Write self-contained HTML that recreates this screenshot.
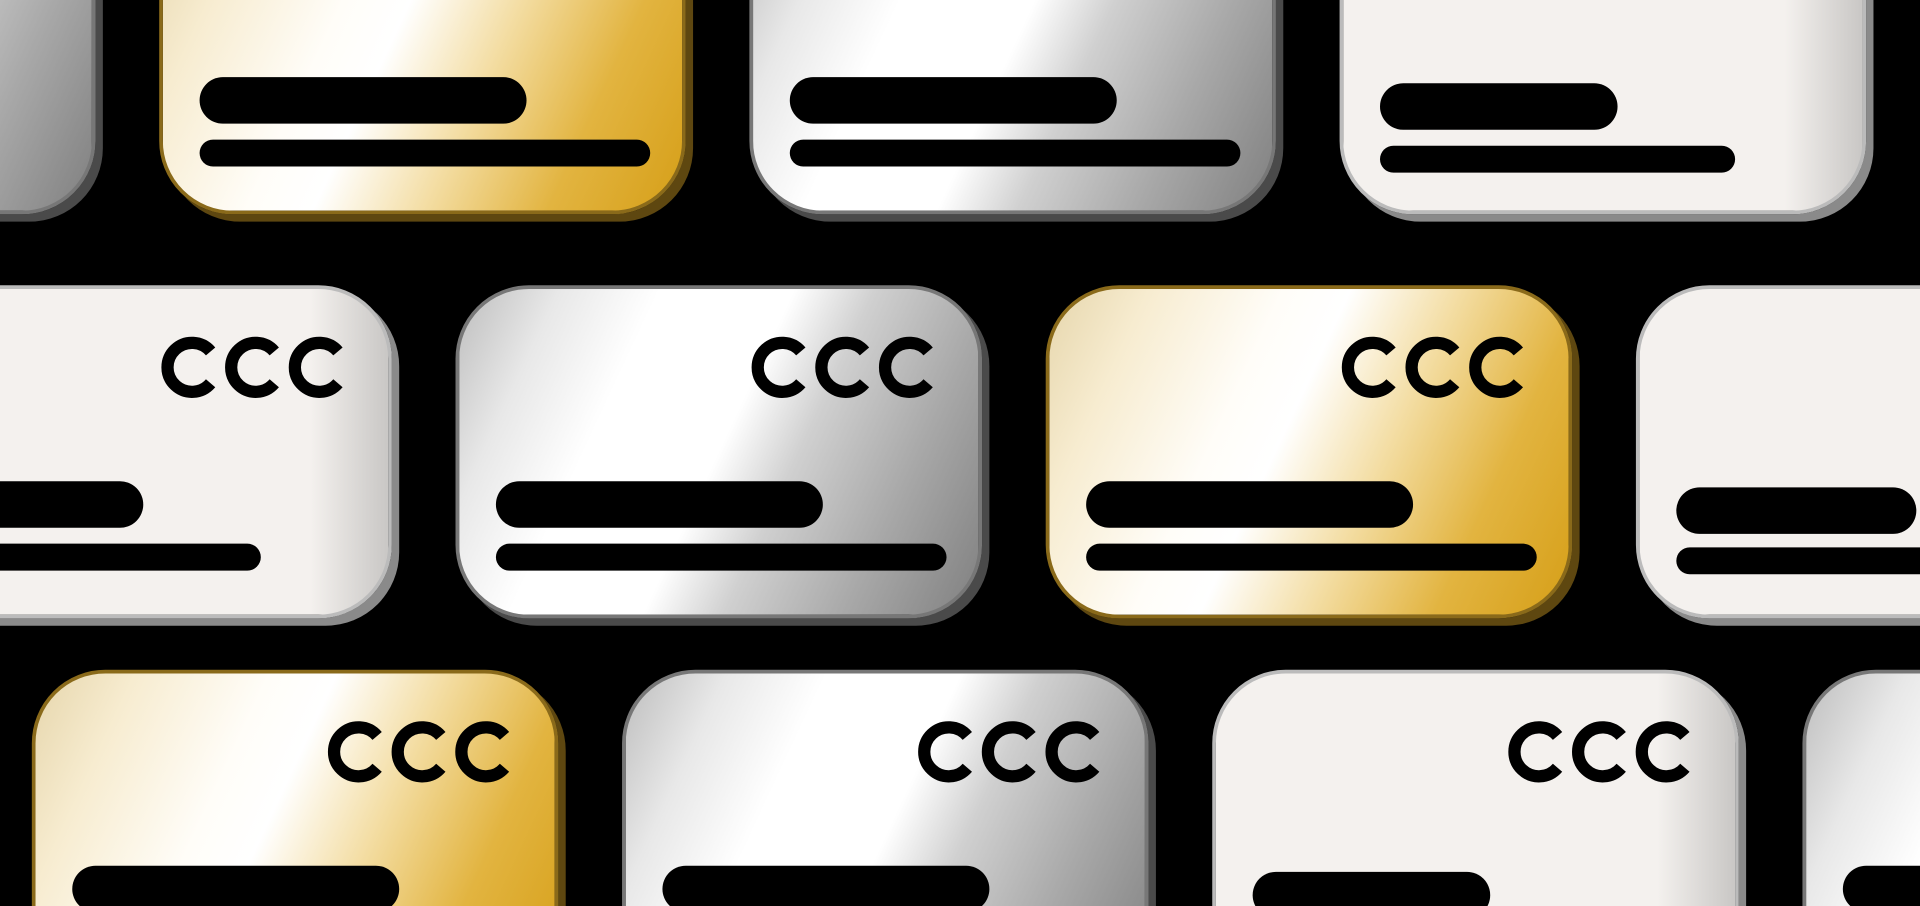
<!DOCTYPE html>
<html><head><meta charset="utf-8"><style>
html,body{margin:0;padding:0;background:#000;overflow:hidden;width:1920px;height:906px;position:relative}
#clip{position:absolute;left:0;top:0;width:1920px;height:906px;overflow:hidden}
#w{position:absolute;left:0;top:0;width:1568px;height:740px;overflow:hidden;transform:scale(1.22449);transform-origin:0 0}
.c{position:absolute;width:430px;height:272px;border-radius:60px;box-sizing:border-box;border:3px solid}
.g{background:linear-gradient(115deg,#e6d6ac 0%,#f7ecd0 15%,#fffdf8 35%,#fff 45%,#f3dca0 62%,#e2b440 80%,#d69f18 100%);border-color:#8a6a1a;box-shadow:6px 6px 0 #5e4710}
.s{background:linear-gradient(115deg,#bdbdbd 0%,#e8e8e8 15%,#fff 30%,#fff 50%,#d0d0d0 62%,#a8a8a8 80%,#808080 100%);border-color:#777;box-shadow:6px 6px 0 #4a4a4a}
.wh{background:linear-gradient(90deg,#f4f1ee 0%,#f4f1ee 85%,#c9c7c5 100%);border-color:#bbb;box-shadow:6px 6px 0 #8a8a8a}
.b1{position:absolute;left:30px;top:157px;width:267px;height:38px;border-radius:19px;background:#000}
.b2{position:absolute;left:30px;top:208px;width:368px;height:22px;border-radius:11px;background:#000}
svg{position:absolute;left:237px;top:34px}
</style></head><body><div id="clip"><div id="w">
<!-- row1 -->
<div class="c s" style="left:-352px;top:-97px"></div>
<div class="c g" style="left:130px;top:-97px"><div class="b1"></div><div class="b2"></div></div>
<div class="c s" style="left:612px;top:-97px"><div class="b1"></div><div class="b2"></div></div>
<div class="c wh" style="left:1094px;top:-97px"><div class="b1" style="width:194px;top:162px"></div><div class="b2" style="width:290px;top:213px"></div></div>
<!-- row2 -->
<div class="c wh" style="left:-110px;top:233px"><svg width="160" height="60"><g fill="none" stroke="#000" stroke-width="10"><path d="M42 17 A20 20 0 1 0 42 43"/><path d="M94 17 A20 20 0 1 0 94 43"/><path d="M146 17 A20 20 0 1 0 146 43"/></g></svg><div class="b1" style="width:194px"></div><div class="b2" style="width:290px"></div></div>
<div class="c s" style="left:372px;top:233px"><svg width="160" height="60"><g fill="none" stroke="#000" stroke-width="10"><path d="M42 17 A20 20 0 1 0 42 43"/><path d="M94 17 A20 20 0 1 0 94 43"/><path d="M146 17 A20 20 0 1 0 146 43"/></g></svg><div class="b1"></div><div class="b2"></div></div>
<div class="c g" style="left:854px;top:233px"><svg width="160" height="60"><g fill="none" stroke="#000" stroke-width="10"><path d="M42 17 A20 20 0 1 0 42 43"/><path d="M94 17 A20 20 0 1 0 94 43"/><path d="M146 17 A20 20 0 1 0 146 43"/></g></svg><div class="b1"></div><div class="b2"></div></div>
<div class="c wh" style="left:1336px;top:233px"><svg width="160" height="60"><g fill="none" stroke="#000" stroke-width="10"><path d="M42 17 A20 20 0 1 0 42 43"/><path d="M94 17 A20 20 0 1 0 94 43"/><path d="M146 17 A20 20 0 1 0 146 43"/></g></svg><div class="b1" style="top:162px;width:196px"></div><div class="b2" style="top:211px"></div></div>
<!-- row3 -->
<div class="c g" style="left:26px;top:547px"><svg width="160" height="60"><g fill="none" stroke="#000" stroke-width="10"><path d="M42 17 A20 20 0 1 0 42 43"/><path d="M94 17 A20 20 0 1 0 94 43"/><path d="M146 17 A20 20 0 1 0 146 43"/></g></svg><div class="b1"></div><div class="b2"></div></div>
<div class="c s" style="left:508px;top:547px"><svg width="160" height="60"><g fill="none" stroke="#000" stroke-width="10"><path d="M42 17 A20 20 0 1 0 42 43"/><path d="M94 17 A20 20 0 1 0 94 43"/><path d="M146 17 A20 20 0 1 0 146 43"/></g></svg><div class="b1"></div><div class="b2"></div></div>
<div class="c wh" style="left:990px;top:547px"><svg width="160" height="60"><g fill="none" stroke="#000" stroke-width="10"><path d="M42 17 A20 20 0 1 0 42 43"/><path d="M94 17 A20 20 0 1 0 94 43"/><path d="M146 17 A20 20 0 1 0 146 43"/></g></svg><div class="b1" style="top:162px;width:194px"></div><div class="b2"></div></div>
<div class="c s" style="left:1472px;top:547px"><div class="b1"></div><div class="b2"></div></div>
</div></div></body></html>
